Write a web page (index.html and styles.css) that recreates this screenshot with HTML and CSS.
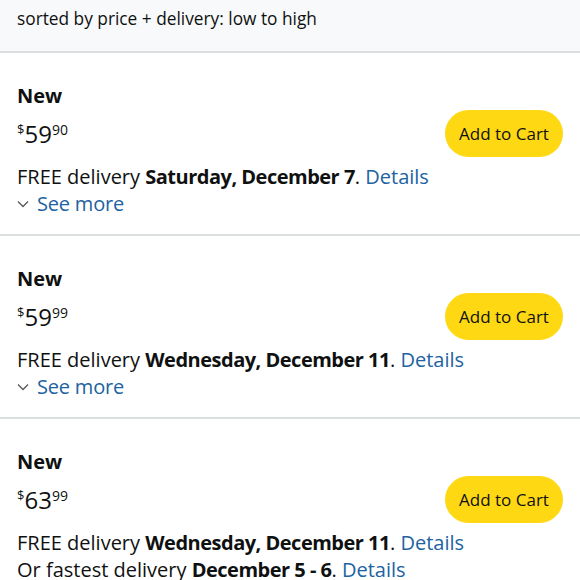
FILE: index.html
```html
<!DOCTYPE html>
<html lang="en">
<head>
  <meta charset="UTF-8" />
  <meta name="viewport" content="width=device-width, initial-scale=1.0"/>
  <title>Offers</title>
  <link rel="stylesheet" href="styles.css">
</head>
<body>
  <div class="sort-bar">sorted by price + delivery: low to high</div>

  <div class="offer">
    <div class="condition">New</div>
    <div class="price-row">
      <div class="price"><span class="sym">$</span><span class="whole">59</span><span class="frac">90</span></div>
      <button class="cart-btn">Add to Cart</button>
    </div>
    <div class="delivery">FREE delivery <b>Saturday, December 7</b>. <a href="#">Details</a></div>
    <div class="see-more">
      <svg width="12" height="8" viewBox="0 0 12 8"><polyline points="1,1.5 6,6.5 11,1.5" fill="none" stroke="#565959" stroke-width="1.3"/></svg>
      <a href="#">See more</a>
    </div>
  </div>

  <div class="offer">
    <div class="condition">New</div>
    <div class="price-row">
      <div class="price"><span class="sym">$</span><span class="whole">59</span><span class="frac">99</span></div>
      <button class="cart-btn">Add to Cart</button>
    </div>
    <div class="delivery">FREE delivery <b>Wednesday, December 11</b>. <a href="#">Details</a></div>
    <div class="see-more">
      <svg width="12" height="8" viewBox="0 0 12 8"><polyline points="1,1.5 6,6.5 11,1.5" fill="none" stroke="#565959" stroke-width="1.3"/></svg>
      <a href="#">See more</a>
    </div>
  </div>

  <div class="offer">
    <div class="condition">New</div>
    <div class="price-row">
      <div class="price"><span class="sym">$</span><span class="whole">63</span><span class="frac">99</span></div>
      <button class="cart-btn">Add to Cart</button>
    </div>
    <div class="delivery">FREE delivery <b>Wednesday, December 11</b>. <a href="#">Details</a></div>
    <div class="delivery">Or fastest delivery <b>December 5 - 6</b>. <a href="#">Details</a></div>
  </div>
</body>
</html>
```

FILE: styles.css
```css
body {
  margin: 0;
  background-color: #fff;
  color: #0f1111;
  font-family: 'Open Sans', 'Noto Sans', sans-serif;
}
a {
  color: #2162a1;
  text-decoration: none;
}
b {
  letter-spacing: -0.5px;
}
.sort-bar {
  background-color: #f7f9fa;
  border-bottom: 2px solid #dcdfdf;
  padding: 6px 17px 0;
  box-sizing: border-box;
  height: 53px;
  font-size: 17.3px;
  line-height: 26px;
}
.offer {
  padding: 30px 17px 17px;
  border-bottom: 2px solid #dcdfdf;
}
.condition {
  font-size: 20px;
  font-weight: bold;
  line-height: 26px;
  letter-spacing: 0;
}
.price-row {
  display: flex;
  align-items: center;
  justify-content: space-between;
  margin-top: 1px;
}
.price {
  display: flex;
  align-items: flex-start;
  line-height: 1;
}
.sym {
  font-size: 13px;
  margin-top: 1px;
}
.whole {
  font-size: 24px;
}
.frac {
  font-size: 14px;
  margin-top: 1px;
}
.cart-btn {
  width: 118px;
  height: 47px;
  border: none;
  border-radius: 24px;
  background-color: #ffd814;
  color: #0f1111;
  font-family: inherit;
  font-size: 17px;
  padding: 0;
}
.delivery {
  font-size: 20px;
  line-height: 27px;
  margin-top: 6px;
}
.delivery + .delivery {
  margin-top: 0;
}
.see-more {
  display: flex;
  align-items: center;
  gap: 8px;
  font-size: 20px;
  line-height: 27px;
  letter-spacing: -0.2px;
}
```
